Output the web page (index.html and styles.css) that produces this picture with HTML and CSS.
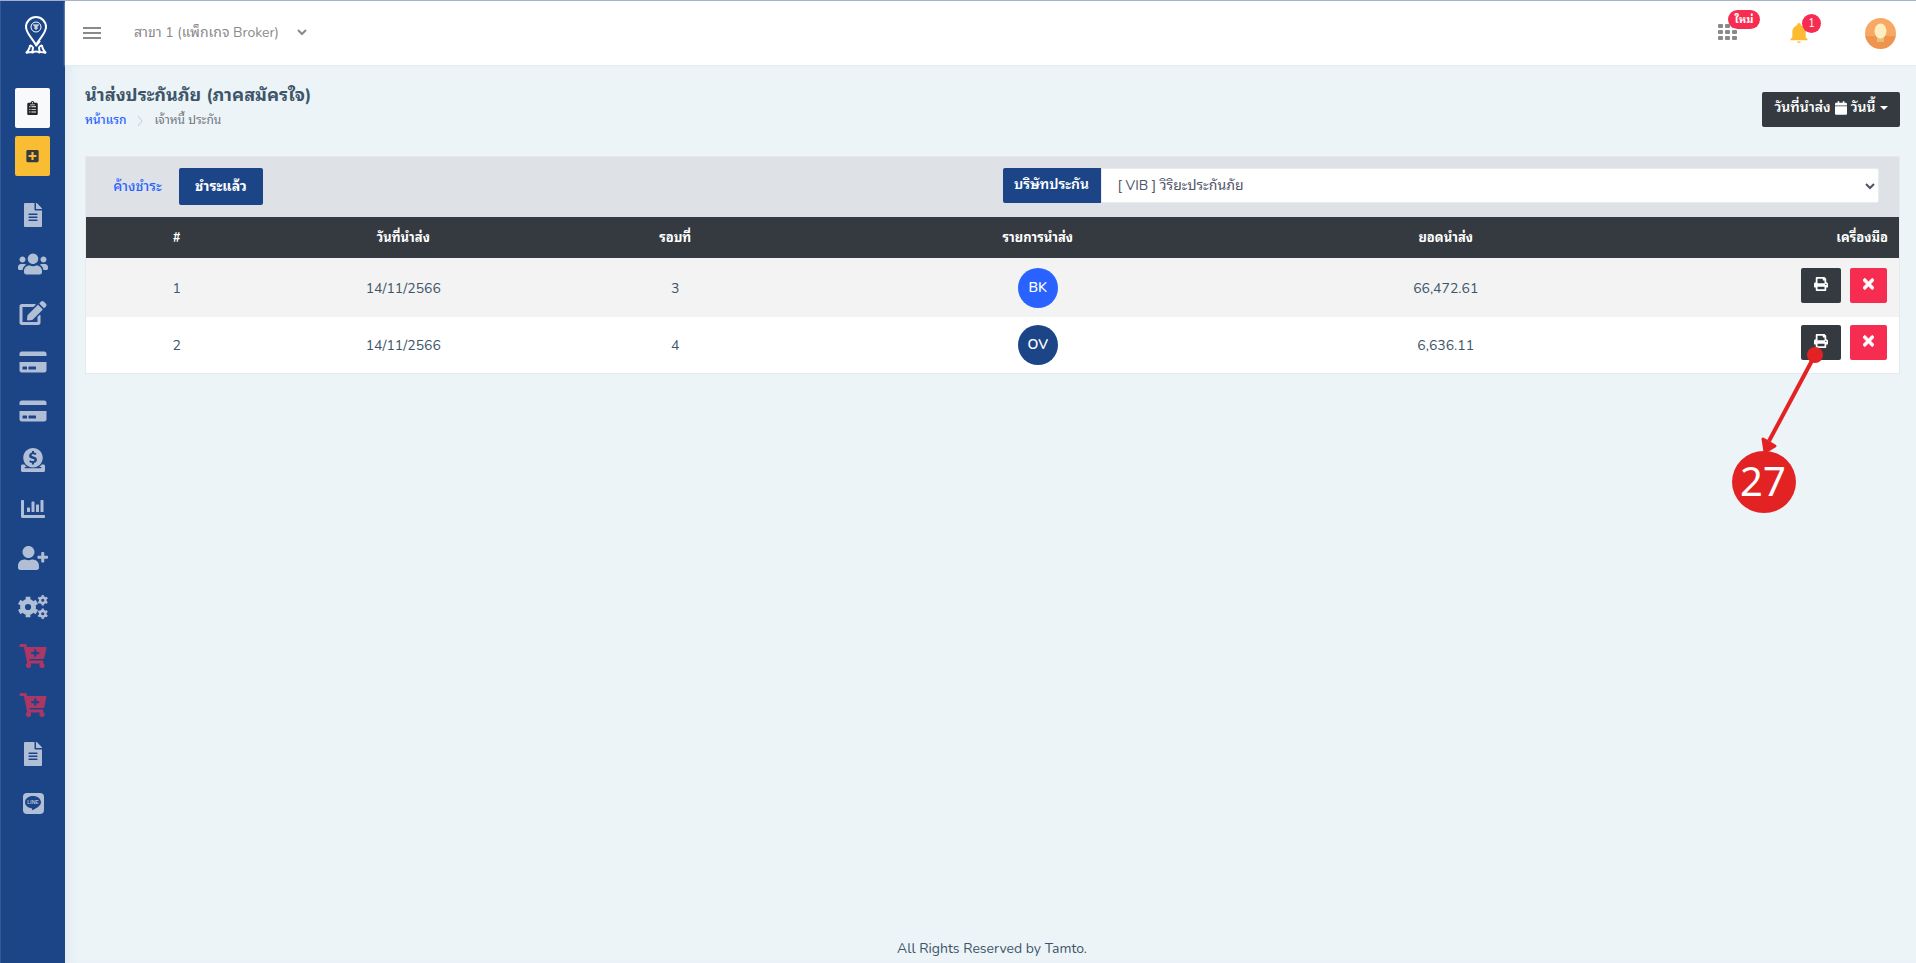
FILE: index.html
```html
<!DOCTYPE html>
<html lang="th">
<head>
<meta charset="utf-8">
<meta name="viewport" content="width=device-width, initial-scale=1">
<title>นำส่งประกันภัย</title>
<link rel="stylesheet" href="styles.css">
</head>
<body>
<svg class="sprite" aria-hidden="true">
  <symbol id="file" viewBox="0 0 384 512"><path d="M224 136V0H24C10.700 0 0 10.700 0 24v464c0 13.300 10.700 24 24 24h336c13.300 0 24-10.700 24-24V160H248c-13.200 0-24-10.800-24-24zm64 236c0 6.600-5.400 12-12 12H108c-6.600 0-12-5.400-12-12v-8c0-6.600 5.400-12 12-12h168c6.600 0 12 5.400 12 12v8zm0-64c0 6.600-5.400 12-12 12H108c-6.600 0-12-5.400-12-12v-8c0-6.600 5.400-12 12-12h168c6.600 0 12 5.400 12 12v8zm0-72v8c0 6.600-5.400 12-12 12H108c-6.600 0-12-5.400-12-12v-8c0-6.600 5.400-12 12-12h168c6.600 0 12 5.400 12 12zm96-114.100v6.100H256V0h6.100c6.400 0 12.500 2.500 17 7l97.900 98c4.500 4.500 7 10.600 7 16.900z"/></symbol>
  <symbol id="users" viewBox="0 0 640 512"><path d="M96 224c35.300 0 64-28.700 64-64s-28.700-64-64-64-64 28.700-64 64 28.700 64 64 64zm448 0c35.300 0 64-28.700 64-64s-28.700-64-64-64-64 28.700-64 64 28.700 64 64 64zm32 32h-64c-17.600 0-33.500 7.100-45.100 18.600 40.300 22.100 68.900 62 75.100 109.400h66c17.700 0 32-14.300 32-32v-32c0-35.300-28.700-64-64-64zm-256 0c61.900 0 112-50.100 112-112S381.900 32 320 32 208 82.100 208 144s50.100 112 112 112zm76.800 32h-8.300c-20.800 10-43.900 16-68.500 16s-47.600-6-68.500-16h-8.300C179.600 288 128 339.600 128 403.200V432c0 26.500 21.500 48 48 48h288c26.500 0 48-21.500 48-48v-28.800c0-63.600-51.600-115.200-115.200-115.200zm-223.700-13.400C161.500 263.100 145.600 256 128 256H64c-35.300 0-64 28.700-64 64v32c0 17.700 14.300 32 32 32h65.900c6.300-47.400 34.900-87.300 75.200-109.400z"/></symbol>
  <symbol id="edit" viewBox="0 0 576 512"><path d="M402.600 83.200l90.200 90.200c3.800 3.800 3.800 10 0 13.800L274.400 405.600l-92.800 10.300c-12.400 1.400-22.900-9.100-21.500-21.500l10.300-92.800L388.800 83.200c3.800-3.800 10-3.800 13.800 0zm162-22.900l-48.800-48.800c-15.200-15.200-39.900-15.200-55.200 0l-35.400 35.400c-3.800 3.800-3.800 10 0 13.800l90.200 90.200c3.800 3.800 10 3.800 13.800 0l35.400-35.400c15.200-15.300 15.200-40 0-55.200zM384 346.200V448H64V128h229.800c3.200 0 6.200-1.300 8.500-3.500l40-40c7.600-7.600 2.200-20.500-8.500-20.500H48C21.500 64 0 85.500 0 112v352c0 26.500 21.500 48 48 48h352c26.500 0 48-21.500 48-48V306.200c0-10.700-12.900-16-20.500-8.500l-40 40c-2.200 2.300-3.500 5.300-3.500 8.500z"/></symbol>
  <symbol id="card" viewBox="0 0 576 512"><path d="M0 432c0 26.500 21.500 48 48 48h480c26.500 0 48-21.500 48-48V256H0v176zm192-68c0-6.600 5.400-12 12-12h136c6.600 0 12 5.400 12 12v40c0 6.600-5.400 12-12 12H204c-6.600 0-12-5.400-12-12v-40zm-128 0c0-6.600 5.400-12 12-12h72c6.600 0 12 5.400 12 12v40c0 6.600-5.400 12-12 12H76c-6.600 0-12-5.400-12-12v-40zM576 80v48H0V80c0-26.500 21.500-48 48-48h480c26.500 0 48 21.500 48 48z"/></symbol>
  <symbol id="donate" viewBox="0 0 512 512"><path fill-rule="evenodd" d="M256 416c114.900 0 208-93.100 208-208S370.900 0 256 0 48 93.100 48 208s93.100 208 208 208zM234 66h42v30c20 2 38 9 54 20l-24 34c-22-14-52-20-70-10-15 9-14 26 2 33l60 18c42 14 56 64 30 98-13 18-32 27-52 30v31h-42v-31c-23-3-45-11-62-25l26-34c24 17 54 24 76 15 19-8 18-28 0-35l-60-19c-56-20-56-105 20-125z"/><path d="M480 352h-41c-13 20-30 39-50 54h36c6 0 10 4 10 9v6c0 5-4 9-10 9H87c-6 0-10-4-10-9v-6c0-5 4-9 10-9h36c-20-15-37-34-50-54H32c-18 0-32 14-32 32v96c0 18 14 32 32 32h448c18 0 32-14 32-32v-96c0-18-14-32-32-32z"/></symbol>
  <symbol id="chart" viewBox="0 0 512 512"><path d="M332.800 320h38.400c6.400 0 12.800-6.400 12.800-12.800V172.800c0-6.400-6.400-12.800-12.800-12.800h-38.400c-6.400 0-12.800 6.400-12.800 12.800v134.400c0 6.400 6.400 12.800 12.800 12.800zm96 0h38.400c6.400 0 12.800-6.400 12.800-12.800V76.800c0-6.400-6.400-12.800-12.800-12.800h-38.400c-6.400 0-12.800 6.400-12.800 12.800v230.400c0 6.400 6.400 12.800 12.800 12.800zm-288 0h38.400c6.400 0 12.800-6.400 12.800-12.800v-70.400c0-6.400-6.400-12.800-12.800-12.800h-38.400c-6.400 0-12.800 6.400-12.800 12.800v70.400c0 6.400 6.400 12.800 12.800 12.800zm96 0h38.400c6.400 0 12.800-6.400 12.800-12.800V108.800c0-6.400-6.400-12.800-12.800-12.800h-38.400c-6.400 0-12.800 6.400-12.800 12.800v198.400c0 6.400 6.400 12.800 12.800 12.800zM496 384H64V80c0-8.800-7.200-16-16-16H16C7.200 64 0 71.200 0 80v336c0 17.700 14.300 32 32 32h464c8.800 0 16-7.200 16-16v-32c0-8.800-7.200-16-16-16z"/></symbol>
  <symbol id="user-plus" viewBox="0 0 640 512"><path d="M624 208h-64v-64c0-8.800-7.200-16-16-16h-32c-8.800 0-16 7.200-16 16v64h-64c-8.800 0-16 7.200-16 16v32c0 8.800 7.200 16 16 16h64v64c0 8.800 7.200 16 16 16h32c8.800 0 16-7.200 16-16v-64h64c8.800 0 16-7.200 16-16v-32c0-8.800-7.200-16-16-16zm-400 48c70.700 0 128-57.300 128-128S294.700 0 224 0 96 57.300 96 128s57.300 128 128 128zm89.600 32h-16.700c-22.200 10.200-46.900 16-72.900 16s-50.600-5.800-72.900-16h-16.700C60.200 288 0 348.200 0 422.400V464c0 26.500 21.500 48 48 48h352c26.500 0 48-21.500 48-48v-41.600c0-74.200-60.200-134.400-134.400-134.400z"/></symbol>
  <symbol id="cogs" viewBox="0 0 640 512">
    <g fill="none" stroke="currentColor">
      <circle cx="214" cy="256" r="118" stroke-width="104"/><path stroke-width="100" stroke-linejoin="round" d="M214 38v66M214 408v66M26 147l57 33M345 332l57 33M402 147l-57 33M83 332l-57 33"/>
      <circle cx="528" cy="112" r="58" stroke-width="50"/><path stroke-width="48" d="M528 0v38M528 186v38M431 56l33 19M592 149l33 19M625 56l-33 19M464 149l-33 19"/>
      <circle cx="528" cy="400" r="58" stroke-width="50"/><path stroke-width="48" d="M528 288v38M528 474v38M431 344l33 19M592 437l33 19M625 344l-33 19M464 437l-33 19"/>
    </g>
  </symbol>
  <symbol id="cart" viewBox="0 0 576 512"><path d="M504.700 320H211.600l6.500 32h268.400c15.400 0 26.800 14.300 23.400 29.300l-5.500 24.300C523.100 414.700 536 433.800 536 456c0 31.200-25.500 56.400-56.800 56-29.800-.4-54.400-24.600-55.200-54.400-.4-16.300 6.100-31 16.800-41.500H231.200C241.600 426.200 248 440.300 248 456c0 31.800-26.500 57.400-58.700 55.900-28.500-1.300-51.700-24.400-53.200-52.900-1.200-22 10.400-41.500 28-51.600L93.900 64H24C10.700 64 0 53.300 0 40V24C0 10.700 10.700 0 24 0h102.500c11.400 0 21.200 8 23.500 19.200L159.200 64H552c15.400 0 26.800 14.300 23.400 29.300l-47.300 208C525.600 312.200 515.900 320 504.700 320zM408 168h-48v-40c0-8.800-7.200-16-16-16h-16c-8.800 0-16 7.200-16 16v40h-48c-8.800 0-16 7.200-16 16v16c0 8.800 7.200 16 16 16h48v40c0 8.800 7.200 16 16 16h16c8.800 0 16-7.200 16-16v-40h48c8.800 0 16-7.200 16-16v-16c0-8.800-7.200-16-16-16z"/></symbol>
  <symbol id="times" viewBox="0 0 352 512"><path stroke="currentColor" stroke-width="24" d="M242.700 256l100.100-100.100c12.300-12.300 12.300-32.200 0-44.500l-22.200-22.200c-12.300-12.300-32.200-12.300-44.500 0L176 189.300 75.900 89.200c-12.300-12.300-32.200-12.300-44.500 0L9.200 111.400c-12.300 12.300-12.300 32.200 0 44.500L109.300 256 9.200 356.100c-12.300 12.300-12.300 32.200 0 44.500l22.200 22.200c12.300 12.300 32.200 12.300 44.500 0L176 322.700l100.100 100.100c12.300 12.300 32.200 12.300 44.500 0l22.200-22.200c12.300-12.300 12.300-32.200 0-44.500L242.700 256z"/></symbol>
  <symbol id="print" viewBox="0 0 512 512"><path d="M448 192V77.300c0-8.500-3.400-16.600-9.400-22.600L393.400 9.400c-6-6-14.100-9.400-22.600-9.400H96C78.300 0 64 14.300 64 32v160c-35.300 0-64 28.700-64 64v112c0 8.800 7.200 16 16 16h48v96c0 17.700 14.300 32 32 32h320c17.700 0 32-14.300 32-32v-96h48c8.800 0 16-7.200 16-16V256c0-35.300-28.700-64-64-64zm-64 256H128v-96h256v96zm0-224H128V64h192v48c0 8.800 7.200 16 16 16h48v96zm48 72c-13.300 0-24-10.700-24-24s10.700-24 24-24 24 10.700 24 24-10.700 24-24 24z"/></symbol>
  <symbol id="calendar" viewBox="0 0 448 512"><path d="M12 192h424c6.600 0 12 5.400 12 12v260c0 26.500-21.500 48-48 48H48c-26.500 0-48-21.500-48-48V204c0-6.600 5.400-12 12-12zm436-44v-36c0-26.500-21.500-48-48-48h-48V12c0-6.600-5.400-12-12-12h-40c-6.600 0-12 5.400-12 12v52H160V12c0-6.600-5.400-12-12-12h-40c-6.600 0-12 5.400-12 12v52H48C21.500 64 0 85.500 0 112v36c0 6.600 5.400 12 12 12h424c6.600 0 12-5.400 12-12z"/></symbol>
  <symbol id="plus-square" viewBox="0 0 448 512"><path d="M400 32H48C21.500 32 0 53.500 0 80v352c0 26.500 21.500 48 48 48h352c26.500 0 48-21.500 48-48V80c0-26.500-21.500-48-48-48zm-32 252c0 6.600-5.400 12-12 12h-92v92c0 6.600-5.400 12-12 12h-56c-6.600 0-12-5.400-12-12v-92H92c-6.600 0-12-5.400-12-12v-56c0-6.600 5.400-12 12-12h92v-92c0-6.600 5.400-12 12-12h56c6.600 0 12 5.400 12 12v92h92c6.600 0 12 5.400 12 12v56z"/></symbol>
  <symbol id="clipboard" viewBox="0 0 384 512"><path fill-rule="evenodd" d="M336 64h-80c0-35-29-64-64-64s-64 29-64 64H48C21 64 0 85 0 112v352c0 27 21 48 48 48h288c27 0 48-21 48-48V112c0-27-21-48-48-48zM192 40a24 24 0 1 1 0 48 24 24 0 0 1 0-48zM72 208a24 24 0 1 1 48 0 24 24 0 0 1-48 0zm0 96a24 24 0 1 1 48 0 24 24 0 0 1-48 0zm0 96a24 24 0 1 1 48 0 24 24 0 0 1-48 0zM152 192h168v32H152zm0 96h168v32H152zm0 96h168v32H152zM104 128h176v24H104z"/></symbol>
  <symbol id="chevron" viewBox="0 0 10 8"><path fill="none" stroke="currentColor" stroke-width="2" d="M1 2l4 4 4-4"/></symbol>
</svg>
<div class="app">
  <aside class="sidebar">
    <a class="logo" href="#" aria-label="Tamto">
      <svg viewBox="0 0 22 38"><g fill="none" stroke="currentColor">
        <path stroke-width="2" d="M11 29C7 22 1 17 1 11a10 10 0 0 1 20 0c0 6-6 11-10 18z"/>
        <circle cx="11" cy="11" r="5" stroke-width="1"/>
        <path stroke-width="1" d="M8 9h2v4M11 8v6M14 9h-2v4"/>
        <path stroke-width="2" d="M11 30l4-5M5 29c0 3-2 6-4 8 2-1 4-1 6-1 1-2 1-3 1-5M17 29c0 3 2 6 4 8-2-1-4-1-6-1-1-2-1-3-1-5M5 29l3 2M17 29l-3 2M7 37c2-2 6-2 8 0"/>
      </g></svg>
    </a>
    <nav class="menu">
      <button class="quick quick-light" aria-label="รายการ"><svg class="i-sm"><use href="#clipboard"/></svg></button>
      <button class="quick quick-amber" aria-label="เพิ่ม"><svg class="i-sm"><use href="#plus-square"/></svg></button>
      <div class="links">
        <a href="#" aria-label="เอกสาร"><svg><use href="#file"/></svg></a>
        <a href="#" aria-label="ลูกค้า"><svg><use href="#users"/></svg></a>
        <a href="#" aria-label="แก้ไข"><svg><use href="#edit"/></svg></a>
        <a href="#" aria-label="ลูกหนี้"><svg><use href="#card"/></svg></a>
        <a href="#" aria-label="เจ้าหนี้"><svg><use href="#card"/></svg></a>
        <a href="#" aria-label="การเงิน"><svg><use href="#donate"/></svg></a>
        <a href="#" aria-label="รายงาน"><svg><use href="#chart"/></svg></a>
        <a href="#" aria-label="เพิ่มผู้ใช้"><svg><use href="#user-plus"/></svg></a>
        <a href="#" aria-label="ตั้งค่า"><svg><use href="#cogs"/></svg></a>
        <a class="hot" href="#" aria-label="สั่งซื้อ"><svg><use href="#cart"/></svg></a>
        <a class="hot" href="#" aria-label="สั่งซื้อเพิ่ม"><svg><use href="#cart"/></svg></a>
        <a href="#" aria-label="คู่มือ"><svg><use href="#file"/></svg></a>
        <a href="#" aria-label="LINE"><svg viewBox="0 0 24 24"><rect x="2" y="2" width="21" height="21" rx="4"/><path fill="#1c4588" d="M12 5c-4.400 0-8 2.700-8 6.200 0 3 2.800 5.500 6.400 6 1 .2.600 1.300.6 2 2.500-1 9-4 9-8C20 7.700 16.400 5 12 5z"/><text x="12" y="13" text-anchor="middle" class="line-text">LINE</text></svg></a>
      </div>
    </nav>
  </aside>
  <div class="page">
    <header class="topbar">
      <button class="burger" aria-label="เมนู"><svg viewBox="0 0 18 12"><path stroke="currentColor" stroke-width="2" d="M0 1h18M0 6h18M0 11h18"/></svg></button>
      <div class="pick branch">
        <select aria-label="สาขา"><option>สาขา 1 (แพ็กเกจ Broker)</option></select>
        <svg><use href="#chevron"/></svg>
      </div>
      <div class="actions">
        <button class="action" aria-label="แอป"><svg class="grid-icon" viewBox="0 0 19 16"><g fill="currentColor"><rect width="5" height="4" rx="1"/><rect x="7" width="5" height="4" rx="1"/><rect x="14" width="5" height="4" rx="1"/><rect y="6" width="5" height="4" rx="1"/><rect x="7" y="6" width="5" height="4" rx="1"/><rect x="14" y="6" width="5" height="4" rx="1"/><rect y="12" width="5" height="4" rx="1"/><rect x="7" y="12" width="5" height="4" rx="1"/><rect x="14" y="12" width="5" height="4" rx="1"/></g></svg><span class="badge badge-new">ใหม่</span></button>
        <button class="action" aria-label="แจ้งเตือน"><svg class="bell" viewBox="3 2 18 21"><path d="M21 19v1H3v-1l2-2v-6c0-3.100 2-5.800 5-6.700V4a2 2 0 0 1 4 0v.3c3 .9 5 3.600 5 6.700v6l2 2m-7 2.500a2 1.500 0 0 1-4 0"/></svg><span class="badge badge-count">1</span></button>
        <button class="avatar" aria-label="บัญชี"><svg viewBox="0 0 31 31"><defs><clipPath id="disc"><circle cx="15.500" cy="15.500" r="15.500"/></clipPath></defs><g clip-path="url(#disc)"><path fill="#f8a865" d="M0 0h31v18H0z"/><path fill="#ee944f" d="M0 18h31v13H0z"/><path fill="#e3c07c" d="M12 18h7v6h-7z"/><ellipse cx="15.500" cy="13" rx="6" ry="7.500" fill="#fdedc0"/></g></svg></button>
      </div>
    </header>
    <main class="main">
      <div class="heading">
        <div>
          <h1>นำส่งประกันภัย (ภาคสมัครใจ)</h1>
          <nav class="crumbs"><a href="#">หน้าแรก</a><svg viewBox="0 0 6 10"><path fill="none" stroke="currentColor" d="M1 0l4 5-4 5"/></svg><span>เจ้าหนี้ ประกัน</span></nav>
        </div>
        <button class="btn btn-dark">วันที่นำส่ง <svg class="i-cal"><use href="#calendar"/></svg> วันนี้ <span class="caret"></span></button>
      </div>
      <section class="card">
        <div class="tools">
          <div class="tabs"><a class="tab" href="#">ค้างชำระ</a><a class="tab tab-on" href="#">ชำระแล้ว</a></div>
          <div class="filter">
            <label for="company">บริษัทประกัน</label>
            <div class="pick company"><select id="company"><option>[ VIB ] วิริยะประกันภัย</option></select><svg><use href="#chevron"/></svg></div>
          </div>
        </div>
        <table>
          <thead><tr><th class="w10">#</th><th class="w15">วันที่นำส่ง</th><th class="w15">รอบที่</th><th class="w25">รายการนำส่ง</th><th class="w20">ยอดนำส่ง</th><th class="end">เครื่องมือ</th></tr></thead>
          <tbody>
            <tr><td>1</td><td>14/11/2566</td><td>3</td><td><span class="tag">BK</span></td><td>66,472.61</td>
              <td><div class="ops"><button class="btn print" aria-label="พิมพ์"><svg><use href="#print"/></svg></button><button class="btn remove" aria-label="ลบ"><svg><use href="#times"/></svg></button></div></td></tr>
            <tr><td>2</td><td>14/11/2566</td><td>4</td><td><span class="tag tag-navy">OV</span></td><td>6,636.11</td>
              <td><div class="ops"><button class="btn print" aria-label="พิมพ์"><svg><use href="#print"/></svg></button><button class="btn remove" aria-label="ลบ"><svg><use href="#times"/></svg></button>
                <svg class="callout" viewBox="0 0 94 170"><circle cx="84" cy="10" r="8"/><path stroke="#e32224" stroke-width="4" d="M84 10L38 96"/><path stroke="#e32224" stroke-width="3" stroke-linejoin="round" d="M32 94l12 7-10 6z"/><ellipse cx="33" cy="137" rx="32" ry="31"/><text x="32" y="151" text-anchor="middle">27</text></svg></div></td></tr>
          </tbody>
        </table>
      </section>
    </main>
    <footer>All Rights Reserved by Tamto.</footer>
  </div>
</div>
</body>
</html>
```
FILE: styles.css
```css
* { box-sizing: border-box; }
body { margin: 0; background: #ecf4f8; color: #3e5569; font: 14px/21px Nunito, "Noto Sans Thai Looped", "Noto Sans", sans-serif; }
button, select { font: inherit; color: inherit; border: 0; background: none; padding: 0; margin: 0; cursor: pointer; }
a { color: #2962ff; text-decoration: none; }
svg { display: block; fill: currentColor; }
.sprite { position: absolute; width: 0; height: 0; }
.app { display: flex; min-height: 100vh; border-top: 1px solid #a2aecb; }

.sidebar { flex: none; width: 65px; background: #1c4588; border-left: 1px solid #335894; }
.logo { display: flex; justify-content: center; align-items: center; height: 64px; padding: 4px 0 0 6px; color: #fff; }
.logo svg { width: 24px; height: 38px; }
.menu { display: flex; flex-direction: column; align-items: center; gap: 8px; padding: 23px 1px 0 0; }
.quick { display: flex; justify-content: center; align-items: center; width: 35px; height: 40px; border-radius: 2px; color: #212529; }
.quick-light { background: #f8f9fa; }
.quick-amber { background: #f9bd34; color: #343a40; }
.i-sm { width: 13px; height: 14px; }
.links { display: flex; flex-direction: column; align-self: stretch; padding-top: 6px; }
.links a { display: flex; justify-content: center; align-items: center; height: 49px; color: #b0bed6; }
.links svg { width: 30px; height: 24px; }
.links .hot { color: #ac3765; }
.line-text { font: bold 5px "Liberation Sans", sans-serif; }

.page { flex: 1; min-width: 0; display: flex; flex-direction: column; box-shadow: inset 12px 0 12px -8px #dfe8ef; }
.topbar { display: flex; align-items: center; height: 64px; padding: 0 20px 0 18px; background: #fff; color: #8a8a8a; box-shadow: 0 1px 2px #e2ebef; }
.burger svg { width: 18px; height: 12px; }
.pick { display: grid; align-items: center; }
.pick select { grid-area: 1 / 1; appearance: none; width: 100%; }
.pick svg { grid-area: 1 / 1; justify-self: end; width: 10px; height: 8px; pointer-events: none; }
.branch { width: 173px; margin-left: 33px; padding-bottom: 2px; }
.actions { display: flex; align-items: center; margin-left: auto; }
.action { position: relative; padding-bottom: 2px; }
.action + .action { margin-left: 53px; padding-bottom: 0; }
.grid-icon { width: 19px; height: 16px; }
.bell { width: 18px; height: 20px; color: #fbbc34; }
.badge { position: absolute; background: #f62d51; color: #fff; font-size: 11px; line-height: 19px; height: 19px; border-radius: 10px; text-align: center; }
.badge-new { left: 10px; top: -14px; width: 32px; font-weight: 700; }
.badge-count { left: 12px; top: -9px; width: 19px; }
.avatar { margin-left: 57px; }
.avatar svg { width: 31px; height: 31px; }

.main { flex: 1; padding: 16px 16px 0 20px; }
.heading { display: flex; justify-content: space-between; align-items: center; margin-bottom: 23px; padding-top: 1px; }
h1 { margin: 0; font-size: 18px; line-height: 26px; font-weight: 700; }
.crumbs { display: flex; align-items: center; gap: 11px; font-size: 12px; line-height: 25px; color: #6c757d; }
.crumbs a { font-weight: 500; }
.crumbs svg { width: 6px; height: 10px; color: #c3ccd2; }
.btn { display: inline-flex; align-items: center; justify-content: center; gap: 4px; height: 35px; padding-bottom: 3px; border-radius: 2px; color: #fff; }
.btn-dark { width: 138px; background: #343a40; font-weight: 600; margin-top: 3px; }
.i-cal { width: 12px; height: 14px; }
.caret { border: 4px solid transparent; border-top-color: #fff; border-bottom: 0; }

.card { background: #fff; border: 1px solid #e6eaed; }
.tools { display: grid; grid-template-columns: 1fr 1fr; gap: 20px; padding: 11px 20px 12px; background: #dee2e6; }
.tabs { display: flex; }
.tab { display: flex; align-items: center; justify-content: center; width: 73px; height: 37px; padding-right: 10px; font-weight: 500; }
.tab-on { width: 84px; padding: 0; background: #1c4588; color: #fff; border-radius: 2px; font-weight: 700; }
.filter { display: flex; height: 35px; }
.filter label { width: 98px; line-height: 33px; text-align: center; background: #1c4588; color: #fff; font-weight: 600; border-radius: 2px 0 0 2px; }
.company { flex: 1; padding-right: 3px; background: #fff; border: 1px solid #e9ecef; color: #4f5467; border-radius: 0 2px 2px 0; }
.company select { height: 33px; padding-left: 16px; }

table { width: 100%; table-layout: fixed; border-collapse: collapse; text-align: center; }
th { height: 41px; padding: 1px 11px 0; background: #343a40; color: #fff; font-size: 13px; font-weight: 700; }
td { padding: 8px 12px; }
tbody tr:first-child { background: #f3f3f3; }
tbody tr:first-child td { padding-top: 10px; padding-bottom: 9px; }
.w10 { width: 10%; }
.w15 { width: 15%; }
.w20 { width: 20%; }
.w25 { width: 25%; }
.end { text-align: right; }
.tag { display: block; width: 40px; margin: 0 auto; line-height: 40px; border-radius: 50%; background: #2962ff; color: #fff; font-weight: 600; }
.tag-navy { background: #1c4588; }
.ops { position: relative; display: flex; justify-content: flex-end; gap: 9px; height: 40px; }
.print { width: 40px; background: #343a40; }
.print svg { width: 14px; height: 14px; }
.remove { width: 37px; background: #f62d51; }
.remove svg { width: 11px; height: 16px; }
.callout { position: absolute; top: 20px; right: 62px; width: 94px; height: 170px; color: #e32224; pointer-events: none; }
.callout text { fill: #fff; font: 40px "Noto Sans", sans-serif; }
footer { padding: 0 12px 4px 15px; text-align: center; }
```
